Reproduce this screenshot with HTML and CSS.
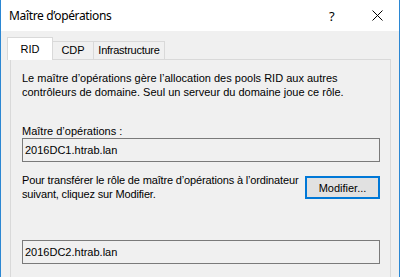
FILE: index.html
```html
<!DOCTYPE html>
<html lang="fr">
<head>
    <title>Maître d'opérations</title>
    <link rel="stylesheet" href="styles.css">
</head>
<body>
    <div class="titlebar">
        <span class="title">Maître d’opérations</span>
        <span class="help">?</span>
        <span class="close">
            <svg width="11" height="11" viewBox="0 0 11 11"><path d="M0.5 0.5 L10.5 10.5 M10.5 0.5 L0.5 10.5" stroke="#000" stroke-width="1" fill="none"/></svg>
        </span>
    </div>

    <div class="tabs">
        <div class="tab active">RID</div>
        <div class="tab cdp">CDP</div>
        <div class="tab infra">Infrastructure</div>
    </div>

    <div class="panel">
        <p class="info">Le maître d’opérations gère l’allocation des pools RID aux autres contrôleurs de domaine. Seul un serveur du domaine joue ce rôle.</p>
        <div class="label">Maître d’opérations :</div>
        <div class="field">2016DC1.htrab.lan</div>
        <div class="transfer">
            <p class="info">Pour transférer le rôle de maître d’opérations à l’ordinateur suivant, cliquez sur Modifier.</p>
            <button class="button">Modifier...</button>
        </div>
        <div class="field last">2016DC2.htrab.lan</div>
    </div>
</body>
</html>
```

FILE: styles.css
```css
body {
    margin: 0;
    width: 398px;
    height: 277px;
    overflow: hidden;
    display: flex;
    flex-direction: column;
    background: #f0f0f0;
    border-left: 1px solid #2b87d3;
    border-right: 1px solid #2b87d3;
    font-family: 'Liberation Sans', Arial, sans-serif;
    font-size: 11px;
    color: #000;
}
.titlebar {
    height: 31px;
    flex: none;
    background: #fff;
    display: flex;
    align-items: center;
}
.title {
    font-family: 'Noto Sans', sans-serif;
    font-size: 12px;
    letter-spacing: -0.35px;
    margin-left: 8px;
    flex: 1;
}
.help {
    font-family: 'Noto Sans', sans-serif;
    font-size: 13px;
    width: 12px;
    margin-right: 31px;
}
.close {
    display: flex;
    margin-right: 16px;
}
.tabs {
    display: flex;
    flex: none;
    align-items: flex-end;
    margin: 7px 0 0 6px;
    height: 21px;
    position: relative;
    z-index: 1;
}
.tab {
    background: #f0f0f0;
    border: 1px solid #d9d9d9;
    border-bottom: none;
    height: 17px;
    line-height: 17px;
    text-align: center;
    margin-left: -1px;
}
.tab.active {
    background: #fff;
    width: 44px;
    height: 22px;
    line-height: 22px;
    margin-left: 0;
    margin-bottom: -1px;
}
.tab.cdp {
    width: 40px;
}
.tab.infra {
    width: 70px;
    letter-spacing: -0.25px;
}
.panel {
    flex: 1;
    margin: 0 8px 0 9px;
    border: 1px solid #d9d9d9;
    border-bottom: none;
    padding: 11px 10px 0 11px;
}
.info {
    margin: 0;
    line-height: 14px;
}
.label {
    margin-top: 25px;
    line-height: 14px;
}
.field {
    height: 22px;
    line-height: 22px;
    border: 1px solid #7a7a7a;
    padding-left: 2px;
}
.transfer {
    display: flex;
    align-items: flex-start;
    margin-top: 11px;
}
.transfer .info {
    width: 283px;
    letter-spacing: -0.15px;
}
.button {
    margin-left: auto;
    margin-top: 3px;
    width: 75px;
    height: 23px;
    background: #e1e1e1;
    border: 2px solid #0078d7;
    font-family: 'Liberation Sans', Arial, sans-serif;
    font-size: 11px;
    padding: 0;
}
.field.last {
    margin-top: 39px;
}
```
